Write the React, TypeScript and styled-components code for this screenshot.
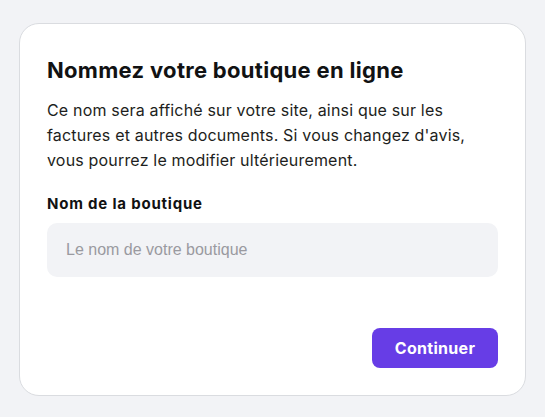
import React from 'react';
import styled, { createGlobalStyle } from 'styled-components';

const GlobalStyle = createGlobalStyle`
  html, body {
    margin: 0;
    padding: 0;
    background: #f2f3f6;
  }
  body {
    font-family: Inter, "Noto Sans", sans-serif;
    color: #1d1e20;
  }
`;

const Page = styled.div`
  padding: 23px 19px;
`;

const Card = styled.div`
  background: #ffffff;
  border: 1px solid #dadce0;
  border-radius: 20px;
  padding: 32px 27px 27px;
  display: flex;
  flex-direction: column;
`;

const Title = styled.h1`
  margin: 0;
  font-size: 22px;
  line-height: 28px;
  font-weight: 700;
  letter-spacing: 0.3px;
  color: #111213;
`;

const Description = styled.p`
  margin: 14px 0 0;
  font-size: 16px;
  line-height: 25px;
  letter-spacing: 0.18px;
  color: #1d1e20;
`;

const Label = styled.label`
  margin-top: 21px;
  font-size: 15px;
  line-height: 20px;
  font-weight: 700;
  letter-spacing: 0.8px;
  color: #111213;
`;

const Input = styled.input`
  margin-top: 9px;
  height: 54px;
  border: none;
  border-radius: 10px;
  background: #f2f3f6;
  padding: 0 19px;
  font-family: "Liberation Sans", Arial, sans-serif;
  font-size: 16px;
  color: #1d1e20;
  outline: none;
  &::placeholder {
    color: #9a9aa0;
  }
`;

const Footer = styled.div`
  display: flex;
  justify-content: flex-end;
  margin-top: 51px;
`;

const Button = styled.button`
  width: 126px;
  height: 40px;
  border: none;
  border-radius: 8px;
  background: #673de6;
  color: #ffffff;
  font-family: Inter, "Noto Sans", sans-serif;
  font-size: 16px;
  font-weight: 700;
  letter-spacing: 0.3px;
  cursor: pointer;
`;

export default function App() {
  return (
    <Page>
      <GlobalStyle />
      <Card>
        <Title>Nommez votre boutique en ligne</Title>
        <Description>
          Ce nom sera affiché sur votre site, ainsi que sur les factures et autres documents. Si vous changez d'avis,
          vous pourrez le modifier ultérieurement.
        </Description>
        <Label htmlFor="store-name">Nom de la boutique</Label>
        <Input id="store-name" placeholder="Le nom de votre boutique" />
        <Footer>
          <Button>Continuer</Button>
        </Footer>
      </Card>
    </Page>
  );
}
